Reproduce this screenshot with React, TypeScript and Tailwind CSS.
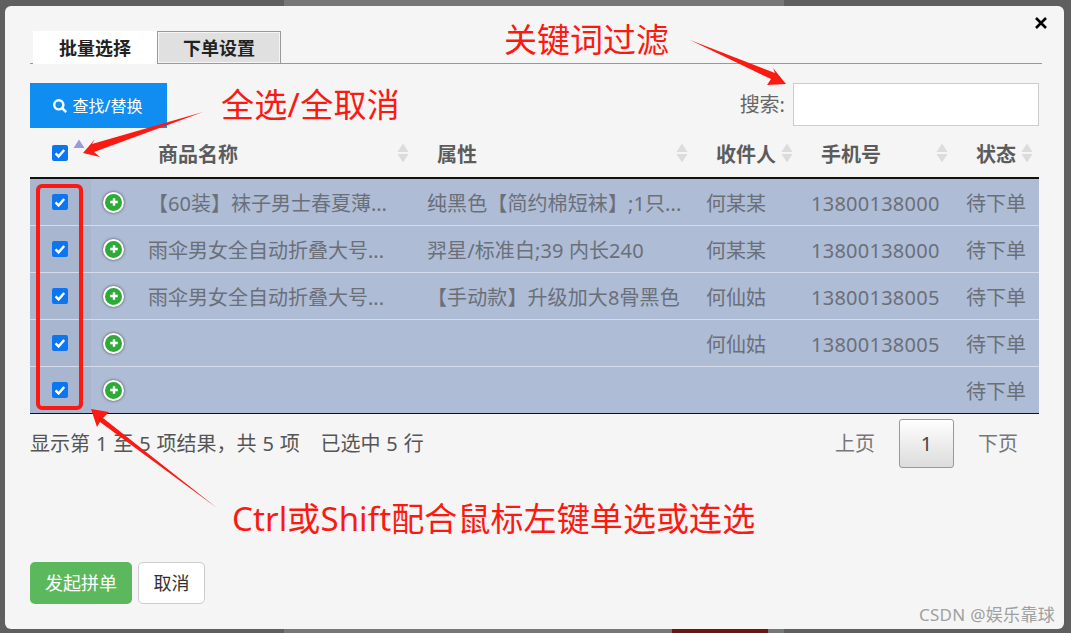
import React from "react";

const cols = "grid grid-cols-[61px_47px_279px_279px_105px_155px_83px]";
const rows = [
  ["【60装】袜子男士春夏薄...", "纯黑色【简约棉短袜】;1只...", "何某某", "13800138000"],
  ["雨伞男女全自动折叠大号...", "羿星/标准白;39 内长240", "何某某", "13800138000"],
  ["雨伞男女全自动折叠大号...", "【手动款】升级加大8骨黑色", "何仙姑", "13800138005"],
  ["", "", "何仙姑", "13800138005"],
  ["", "", "", ""],
];

function Check() {
  return (
    <span className="flex h-4 w-4 items-center justify-center rounded-[2px] bg-[#0b76ef]">
      <svg viewBox="0 0 16 16" className="h-4 w-4">
        <path d="M3.6 8.4l3 3 5.6-6.4" fill="none" stroke="#fff" strokeWidth="2.4" />
      </svg>
    </span>
  );
}

function Plus() {
  return (
    <span className="flex h-[21px] w-[21px] items-center justify-center rounded-full border-2 border-white bg-[#2eaa37] shadow-[0_0_3px_#444]">
      <svg viewBox="0 0 12 12" className="h-3 w-3">
        <path d="M6 2.2v7.6M2.2 6h7.6" stroke="#fff" strokeWidth="2.4" />
      </svg>
    </span>
  );
}

function Sort({ active }: { active?: boolean }) {
  return (
    <svg viewBox="0 0 12 20" className="h-5 w-3 shrink-0">
      <path d="M6 0.5l5.5 8.5H0.5z" fill={active ? "#9a9ae0" : "#dcdcdc"} />
      {!active && <path d="M6 19.5l5.5-8.5H0.5z" fill="#dcdcdc" />}
    </svg>
  );
}

function Head({ label }: { label: string }) {
  return (
    <div className="flex items-center justify-between pl-5 pr-2">
      <span className="mt-px whitespace-nowrap text-[20px] font-bold leading-6 text-[#5c5c5c]">{label}</span>
      <span className="-mt-[2px] h-5"><Sort /></span>
    </div>
  );
}

const cell = "flex items-center whitespace-nowrap pl-2.5 pt-[3px]";

export default function App() {
  return (
    <div className="relative h-[633px] w-[1071px] overflow-hidden bg-[#5f5f5f] pl-[5px] pt-1.5 font-['Noto_Sans','Noto_Sans_CJK_SC',sans-serif]">
      <div className="absolute left-[284px] top-0 h-1.5 w-[500px] bg-[#777]" />
      <div className="absolute bottom-0 left-[284px] h-1 w-[500px] bg-[#777]" />
      <div className="absolute bottom-0 left-[672px] h-1 w-[96px] bg-[#6a1712]" />
      <div className="relative flex h-[623px] w-[1059px] flex-col rounded-[6px] bg-[#f5f5f5] px-[25px]">
        <div className="absolute right-[16px] top-[10px]">
          <svg viewBox="0 0 14 14" className="h-[14px] w-[14px]">
            <path d="M2 2l10 10M12 2L2 12" stroke="#000" strokeWidth="2.6" />
          </svg>
        </div>

        <div className="mt-[25px] flex h-[33px] w-[1012px] border-b border-[#999]">
          <div className="ml-[3px] flex h-[33px] w-[124px] items-center justify-center bg-white text-[18px] font-bold leading-6 text-[#222]">批量选择</div>
          <div className="flex h-[32px] w-[124px] items-center justify-center border-x border-t border-[#999] bg-[#e0e0e0] text-[18px] font-bold leading-6 text-[#222] shadow-[inset_0_0_0_1px_#f5f5f5]">下单设置</div>
        </div>

        <div className="mt-[19px] flex h-[45px] w-[1009px] items-start justify-between">
          <div className="flex h-[45px] w-[137px] items-center justify-center gap-[5px] bg-[#0f8df0] pr-[3px] text-[16px] leading-6 text-white">
            <svg viewBox="0 0 16 16" className="h-4 w-4">
              <circle cx="6.8" cy="6.8" r="4.6" fill="none" stroke="#fff" strokeWidth="2.4" />
              <path d="M10.2 10.2l4 4" stroke="#fff" strokeWidth="2.6" />
            </svg>
            查找/替换
          </div>
          <div className="flex items-center gap-2">
            <span className="text-[20px] leading-6 text-[#666]">搜索:</span>
            <div className="h-[43px] w-[246px] border border-[#ccc] bg-white" />
          </div>
        </div>

        <div className="w-[1009px]">
          <div className={cols + " h-[51px] border-b-2 border-[#111] pb-px pt-1"}>
            <div className="flex items-center pl-[22px]">
              <span className="-mt-[2px]"><Check /></span>
              <span className="-mt-[10px] ml-[5px] h-5"><Sort active /></span>
            </div>
            <div />
            <Head label="商品名称" />
            <Head label="属性" />
            <Head label="收件人" />
            <Head label="手机号" />
            <div className="flex items-center justify-between pl-5 pr-1.5">
              <span className="mt-px whitespace-nowrap text-[20px] font-bold leading-6 text-[#5c5c5c]">状态</span>
              <span className="-mt-[2px] h-5"><Sort /></span>
            </div>
          </div>
          {rows.map((r, i) => (
            <div key={i} className={cols + " h-[47px] items-stretch border-b border-[#d5dbe8] bg-[#aebcd6] text-[20px] leading-6 text-[#6b6f78] last:border-[#111]"}>
              <div className="flex items-center justify-center bg-[#a9b6cf] pr-px"><Check /></div>
              <div className="flex items-center pl-3"><Plus /></div>
              <div className={cell}>{r[0]}</div>
              <div className={cell + " tracking-[0.1px]"}>{r[1]}</div>
              <div className={cell}>{r[2]}</div>
              <div className={cell + " tracking-[0.25px]"}>{r[3]}</div>
              <div className={cell}>待下单</div>
            </div>
          ))}
        </div>

        <div className="mt-[5px] flex w-[1009px] items-start justify-between">
          <div className="mt-[13px] whitespace-pre text-[20px] leading-6 text-[#555] [word-spacing:0.7px]">
            显示第 1 至 5 项结果，共 5 项   <span className="ml-[3px]">已选中 5 行</span>
          </div>
          <div className="mr-[21px] flex items-center gap-[24px] text-[20px] leading-6 text-[#777]">
            <span>上页</span>
            <span className="flex h-[49px] w-[55px] items-center justify-center rounded-[3px] border border-[#999] bg-gradient-to-b from-white to-[#dcdcdc] text-[#444]">1</span>
            <span>下页</span>
          </div>
        </div>

        <div className="mt-[94px] flex gap-[6px]">
          <div className="flex h-[42px] w-[102px] items-center justify-center rounded-[5px] bg-[#5cb85c] text-[18px] leading-6 text-white">发起拼单</div>
          <div className="flex h-[42px] w-[67px] items-center justify-center rounded-[5px] border border-[#ccc] bg-white text-[18px] leading-6 text-[#333]">取消</div>
        </div>
      </div>

      <div className="absolute left-[504px] top-[20px] text-[33px] leading-10 text-[#fb1a12]">关键词过滤</div>
      <div className="absolute left-[221px] top-[85px] text-[33px] leading-10 tracking-[0.3px] text-[#fb1a12]">全选/全取消</div>
      <div className="absolute left-[232px] top-[499px] text-[33px] leading-10 tracking-[0.1px] text-[#fb1a12]">Ctrl或Shift配合鼠标左键单选或连选</div>
      <div className="absolute right-[16px] top-[603px] text-[17px] leading-6 tracking-[0.3px] text-[#a0a0a0]">CSDN @娱乐靠球</div>

      <svg viewBox="0 0 1071 633" className="absolute inset-0 h-[633px] w-[1071px]">
        <path d="M690 40L775 73l-2-5 13 16-19 1 4-6z" fill="#fb1a12" />
        <path d="M203 112L92 144l3-5-12 14 17 4-6-5z" fill="#fb1a12" />
        <path d="M91 409l18 3-6 6 114 90L100 422l-3 5z" fill="#fb1a12" />
      </svg>
      <div className="absolute left-[36px] top-[184px] h-[226px] w-[47px] rounded-[6px] border-4 border-[#fb1a12]" />
    </div>
  );
}
